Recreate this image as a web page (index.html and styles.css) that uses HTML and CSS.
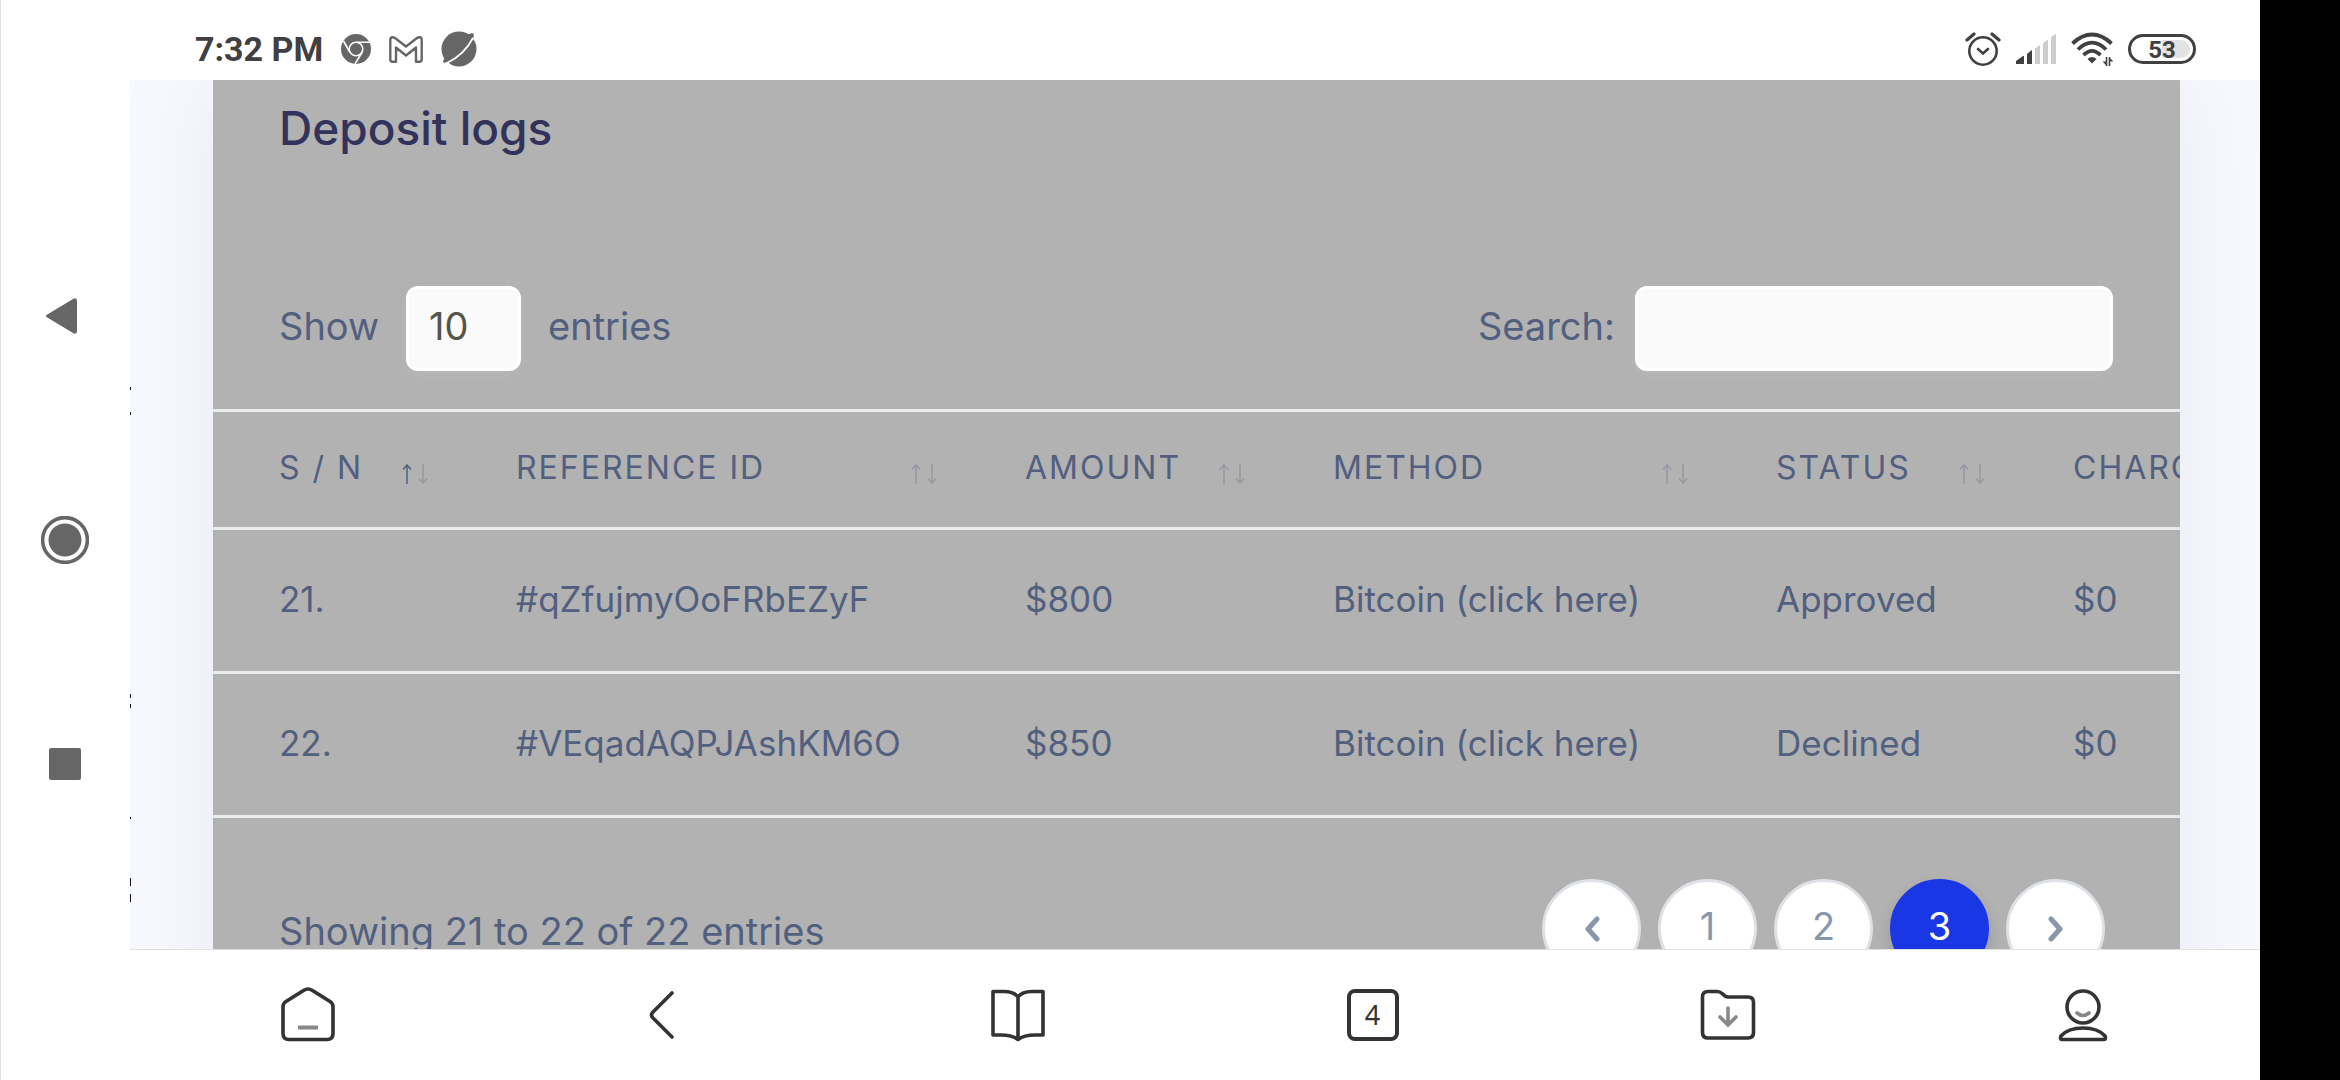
FILE: index.html
```html
<!DOCTYPE html>
<html lang="en">
<head>
    <meta charset="UTF-8">
    <meta name="viewport" content="width=device-width, initial-scale=1.0">
    <title>Deposit logs</title>
    <link rel="stylesheet" href="styles.css">
</head>
<body>
    <nav class="system-nav" aria-label="System">
        <button type="button" aria-label="Back">
            <svg width="48" height="48" viewBox="0 0 48 48"><path d="M5.500 25 32 41q4 2 4-2V9q0-4-4-2L5.500 23Q4 24 5.500 25Z" fill="#666"/></svg>
        </button>
        <button type="button" aria-label="Home">
            <svg width="48" height="48" viewBox="0 0 48 48"><circle cx="24" cy="24" r="22.4" fill="none" stroke="#666" stroke-width="3.6"/><circle cx="24" cy="24" r="16.5" fill="#666"/></svg>
        </button>
        <button type="button" aria-label="Recent apps">
            <svg width="48" height="48" viewBox="0 0 48 48"><rect x="8" y="8" width="32" height="32" rx="2" fill="#666"/></svg>
        </button>
    </nav>

    <div class="screen">
        <header class="status-bar">
            <div class="status-left">
                <span class="clock">7:32 PM</span>
                <svg width="30" height="30" viewBox="0 0 30 30"><circle cx="15" cy="15" r="15" fill="#666"/><g fill="none" stroke="#fff" stroke-width="1.6"><circle cx="15" cy="15" r="6.8"/><path d="M15 8.2h14M9 18.5 2.5 7M21 18.5 14 30"/></g></svg>
                <svg width="34" height="27" viewBox="0 0 34 27"><path d="M3.5 1.300Q5 1.300 6 2L17 10.500 28 2Q29 1.300 30.500 1.300 32.700 1.300 32.700 4V23.500Q32.700 25.700 30.500 25.700H27V11.500L17 19.500 7 11.500V25.700H3.500Q1.300 25.700 1.300 23.500V4Q1.300 1.300 3.500 1.300Z" fill="none" stroke="#666" stroke-width="2.400" stroke-linejoin="round"/></svg>
                <svg width="36" height="36" viewBox="0 0 36 36"><circle cx="18" cy="18" r="17.500" fill="#666"/><path d="M24 5 31 2Q34 2 32 8L28 14ZM5 24 2 30Q2 33 6 31L10 29Z" fill="#666"/><path d="M32 7Q23 24 6 32" fill="none" stroke="#fff" stroke-width="1.800"/></svg>
            </div>
            <div class="status-right">
                <svg width="36" height="34" viewBox="0 0 36 34"><g fill="none" stroke="#404040" stroke-linecap="round"><circle cx="18" cy="19" r="13.700" stroke-width="2.600"/><path d="M2 8 9 2M27 2l7 6" stroke-width="3.200"/><path d="m13 17 5 4.500 5-4.500" stroke-width="2.600"/></g></svg>
                <svg width="40" height="30" viewBox="0 0 40 30"><path d="M0 30v-3l7-5q1-.5 1 .5V30ZM11 30V20l4-3.500q1-.5 1 .5v13Z" fill="#404040"/><path d="M19 30V14.500l5-3.500v19ZM27 30V9l5-3.500V30ZM35 30V3l5-3v30Z" fill="#ccc"/></svg>
                <svg width="42" height="34" viewBox="0 0 42 34"><g fill="none" stroke="#404040" stroke-width="3.800"><path d="M1.500 11.500Q11 2.500 21 2.500t19.500 9M7 17.500Q14 10.700 21 10.700t14 6.800M12.500 23Q17 18.800 21 18.800T29.500 23"/></g><path d="M16.500 27q4.500-4 9 0L21 31.500Z" fill="#404040"/><path d="M35.500 25v9M38.500 34v-9" stroke="#404040" stroke-width="1.600"/><path d="M31.500 29.500h4v4ZM42.500 29.500h-4v-4Z" fill="#404040"/></svg>
                <span class="battery"><span>53</span></span>
            </div>
        </header>

        <main class="page">
            <!-- left edge of the content scrolled out of view -->
            <svg class="edge-text" width="1" height="520" viewBox="0 0 1 520" aria-hidden="true"><path d="M0 0h1v3H0ZM0 25h1v3H0ZM0 307h1v4H0ZM0 317h1v4H0ZM0 430h1v2H0ZM0 491h1v8H0ZM0 507h1v8H0Z" fill="#111"/></svg>

            <section class="card">
                <h1>Deposit logs</h1>

                <div class="table-tools">
                    <div class="length">
                        <label for="length">Show</label>
                        <select id="length">
                            <option>10</option>
                            <option>25</option>
                            <option>50</option>
                            <option>100</option>
                        </select>
                        <label for="length">entries</label>
                    </div>
                    <div class="filter">
                        <label for="search">Search:</label>
                        <input type="search" id="search">
                    </div>
                </div>

                <div class="table-wrap">
                    <table>
                        <colgroup>
                            <col class="col-sn">
                            <col class="col-ref">
                            <col class="col-amount">
                            <col class="col-method">
                            <col class="col-status">
                            <col class="col-charge">
                        </colgroup>
                        <thead>
                            <tr>
                                <th class="asc"><div>S / N <svg class="sort" width="26" height="20" viewBox="0 0 26 20"><path class="up" d="M5 20V1M1 5.500 5 1l4 4.500"/><path d="M21 0v19M17 14.500l4 4.500 4-4.500"/></svg></div></th>
                                <th><div>Reference ID <svg class="sort" width="26" height="20" viewBox="0 0 26 20"><path class="up" d="M5 20V1M1 5.500 5 1l4 4.500"/><path d="M21 0v19M17 14.500l4 4.500 4-4.500"/></svg></div></th>
                                <th><div>Amount <svg class="sort" width="26" height="20" viewBox="0 0 26 20"><path class="up" d="M5 20V1M1 5.500 5 1l4 4.500"/><path d="M21 0v19M17 14.500l4 4.500 4-4.500"/></svg></div></th>
                                <th><div>Method <svg class="sort" width="26" height="20" viewBox="0 0 26 20"><path class="up" d="M5 20V1M1 5.500 5 1l4 4.500"/><path d="M21 0v19M17 14.500l4 4.500 4-4.500"/></svg></div></th>
                                <th><div>Status <svg class="sort" width="26" height="20" viewBox="0 0 26 20"><path class="up" d="M5 20V1M1 5.500 5 1l4 4.500"/><path d="M21 0v19M17 14.500l4 4.500 4-4.500"/></svg></div></th>
                                <th><div>Charge</div></th>
                            </tr>
                        </thead>
                        <tbody>
                            <tr>
                                <td>21.</td>
                                <td>#qZfujmyOoFRbEZyF</td>
                                <td>$800</td>
                                <td>Bitcoin (click here)</td>
                                <td>Approved</td>
                                <td>$0</td>
                            </tr>
                            <tr>
                                <td>22.</td>
                                <td>#VEqadAQPJAshKM6O</td>
                                <td>$850</td>
                                <td>Bitcoin (click here)</td>
                                <td>Declined</td>
                                <td>$0</td>
                            </tr>
                        </tbody>
                    </table>
                </div>

                <div class="table-footer">
                    <div class="info">Showing 21 to 22 of 22 entries</div>
                    <div class="pagination">
                        <button type="button" aria-label="Previous"><svg width="16" height="26" viewBox="0 0 16 26"><path d="M13 3 4 13l9 10" fill="none" stroke="#8898aa" stroke-width="5" stroke-linecap="round" stroke-linejoin="round"/></svg></button>
                        <button type="button"><span>1</span></button>
                        <button type="button"><span>2</span></button>
                        <button type="button" class="active"><span>3</span></button>
                        <button type="button" aria-label="Next"><svg width="16" height="26" viewBox="0 0 16 26"><path d="m3 3 9 10-9 10" fill="none" stroke="#8898aa" stroke-width="5" stroke-linecap="round" stroke-linejoin="round"/></svg></button>
                    </div>
                </div>
            </section>
        </main>

        <nav class="browser-nav" aria-label="Browser">
            <button type="button" aria-label="Home">
                <svg width="56" height="56" viewBox="0 0 56 56"><path d="M3 19.500Q3 16.500 6 14.500L23.500 3.500Q28 .5 32.500 3.500L50 14.500Q53 16.500 53 19.500V46.500Q53 52.500 47 52.500H9Q3 52.500 3 46.500Z" fill="none" stroke="#333" stroke-width="3.600"/><path d="M18 40.500h20" stroke="#888" stroke-width="4"/></svg>
            </button>
            <button type="button" aria-label="Back">
                <svg width="56" height="56" viewBox="0 0 56 56"><path d="M37 6 18 25q-3 3 0 6l19 19" fill="none" stroke="#333" stroke-width="3.600" stroke-linecap="round"/></svg>
            </button>
            <button type="button" aria-label="Reading">
                <svg width="56" height="56" viewBox="0 0 56 56"><path d="M3 4.500H14Q24 4.500 28 10 32 4.500 42 4.500H53V48H45Q34 48 28 52.500 22 48 11 48H3ZM28 10V52" fill="none" stroke="#333" stroke-width="3.600" stroke-linejoin="round"/></svg>
            </button>
            <button type="button" aria-label="Tabs"><span class="tab-count">4</span></button>
            <button type="button" aria-label="Downloads">
                <svg width="56" height="56" viewBox="0 0 56 56"><path d="M2.500 10Q2.500 4.500 8 4.500H17Q20 4.500 22 6.500L25 9Q26 10 29 10H48Q53.500 10 53.500 15.500V45.500Q53.500 51 48 51H8Q2.500 51 2.500 45.500Z" fill="none" stroke="#333" stroke-width="3.600"/><path d="M28 21v16M20 30l8 8 8-8" fill="none" stroke="#888" stroke-width="3.600" stroke-linecap="round"/></svg>
            </button>
            <button type="button" aria-label="Profile">
                <svg width="56" height="56" viewBox="0 0 56 56"><g fill="none" stroke="#333" stroke-width="3.600"><circle cx="28" cy="20" r="16"/><path d="M7 52.500Q4.500 52.500 6 49 13 41 28 41T50 49Q51.500 52.500 49 52.500Z"/></g><path d="M22 26q6 5 12 0" fill="none" stroke="#888" stroke-width="3.600" stroke-linecap="round"/></svg>
            </button>
        </nav>
    </div>
</body>
</html>
```
FILE: styles.css
```css
:root {
    --text-color: #525f7f;
    --heading-color: #32325d;
    --muted-color: #8898aa;
    --primary-color: #1a37e5;
    --line-color: #e9ecef;
    --card-color: #b2b2b2;
    --page-color: #f8f9fe;
}

* {
    margin: 0;
    padding: 0;
    box-sizing: border-box;
}

body {
    display: flex;
    height: 100vh;
    padding-right: 80px;
    overflow: hidden;
    background-color: #000;
    font-family: Inter, "Open Sans", sans-serif;
    font-size: 38px;
    color: var(--text-color);
}

button {
    border: none;
    background: none;
    font: inherit;
    cursor: pointer;
}

svg {
    display: block;
}

/* system navigation */
.system-nav {
    width: 130px;
    flex: none;
    display: flex;
    flex-direction: column;
    align-items: center;
    justify-content: center;
    gap: 176px;
    background-color: #fff;
    box-shadow: inset 1px 0 #e0e0e0;
}

.screen {
    flex: 1;
    min-width: 0;
    display: flex;
    flex-direction: column;
    background-color: #fff;
}

/* status bar */
.status-bar {
    height: 80px;
    flex: none;
    display: flex;
    align-items: center;
    justify-content: space-between;
    padding: 18px 64px 0 65px;
    color: #404040;
}

.status-left,
.status-right {
    display: flex;
    align-items: center;
    gap: 18px;
}

.status-right {
    gap: 15px;
}

.clock {
    font-family: Roboto, sans-serif;
    font-size: 34px;
    font-weight: 700;
}

.battery {
    width: 68px;
    height: 30px;
    padding: 3px;
    border: 3px solid #404040;
    border-radius: 15px;
    font-family: Roboto, sans-serif;
    font-size: 24px;
    font-weight: 700;
    line-height: 20px;
    text-align: center;
}

.battery span {
    display: block;
    height: 18px;
    border-radius: 9px;
    background: linear-gradient(90deg, #fff 50%, #e2e2e2 50%);
}

/* page */
.page {
    position: relative;
    flex: 1;
    min-height: 0;
    overflow: hidden;
    padding: 0 80px 0 83px;
    background-color: var(--page-color);
}

.edge-text {
    position: absolute;
    left: 0;
    top: 307px;
}

.card {
    padding-bottom: 60px;
    background-color: var(--card-color);
    box-shadow: 0 0 88px rgba(136, 152, 170, .15);
}

h1 {
    padding: 15px 66px 125px;
    font-size: 46px;
    font-weight: 500;
    line-height: 66px;
    color: var(--heading-color);
}

.table-tools {
    display: flex;
    justify-content: space-between;
    padding: 0 67px 38px 66px;
}

.length,
.filter {
    display: flex;
    align-items: center;
}

.length {
    gap: 27px;
}

.filter {
    gap: 20px;
}

label,
.pagination span {
    padding-bottom: 5px;
}

select,
input {
    height: 85px;
    border: 3px solid #fff;
    border-radius: 12px;
    background-color: #fafafa;
    box-shadow: 0 4px 8px rgba(255, 255, 255, .08);
    font: inherit;
    color: #55554a;
}

select {
    width: 115px;
    padding: 0 0 5px 20px;
    appearance: none;
}

input {
    width: 478px;
    padding: 0 20px;
}

.table-wrap {
    overflow: hidden;
}

table {
    width: 2113px;
    table-layout: fixed;
    border-collapse: collapse;
    border-bottom: 3px solid var(--line-color);
}

.col-sn { width: 259px; }
.col-ref { width: 509px; }
.col-amount { width: 308px; }
.col-method { width: 443px; }
.col-status { width: 297px; }
.col-charge { width: 297px; }

th,
td {
    padding: 0 44px 4px;
    border-top: 3px solid var(--line-color);
    font-weight: 400;
    text-align: left;
    white-space: nowrap;
}

th:first-child,
td:first-child {
    padding-left: 66px;
}

th {
    height: 118px;
    font-size: 32px;
    letter-spacing: 2px;
    text-transform: uppercase;
}

th div {
    display: flex;
    align-items: center;
    justify-content: space-between;
}

td {
    height: 144px;
    font-size: 35px;
}

.sort {
    margin-top: 12px;
    fill: none;
    stroke: var(--text-color);
    stroke-width: 1.5;
}

.sort path {
    opacity: .3;
}

.asc .sort .up {
    opacity: 1;
}

.table-footer {
    display: flex;
    align-items: center;
    justify-content: space-between;
    padding: 61px 75px 0 66px;
}

.info {
    padding-top: 5px;
}

.pagination {
    display: flex;
    gap: 17px;
}

.pagination button {
    display: flex;
    align-items: center;
    justify-content: center;
    width: 99px;
    height: 99px;
    border: 3px solid #dee2e6;
    border-radius: 50%;
    background-color: #fff;
    color: var(--muted-color);
}

.pagination .active {
    border-color: var(--primary-color);
    background-color: var(--primary-color);
    box-shadow: 0 7px 14px rgba(50, 50, 93, .2);
    color: #fff;
}

/* browser navigation */
.browser-nav {
    height: 131px;
    flex: none;
    display: flex;
    border-top: 1px solid #e0e0e0;
    background-color: #fff;
}

.browser-nav button {
    flex: 1;
    display: flex;
    align-items: center;
    justify-content: center;
}

.tab-count {
    width: 52px;
    height: 52px;
    border: 4px solid #333;
    border-radius: 8px;
    font-family: "Noto Sans", sans-serif;
    font-size: 27px;
    line-height: 44px;
    color: #333;
}
```
